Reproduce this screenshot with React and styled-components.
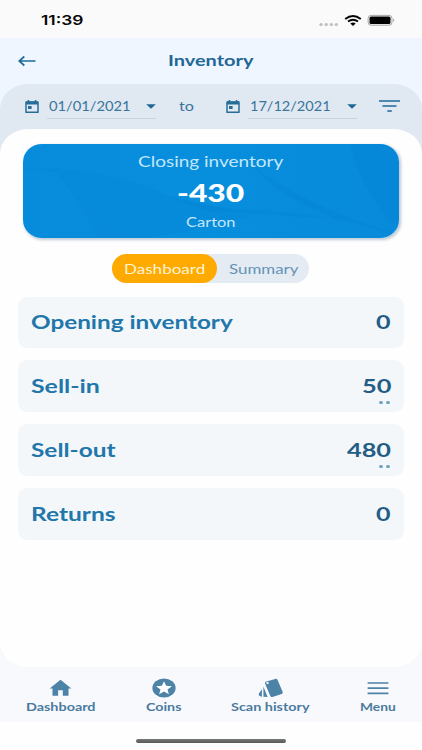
import React, { useLayoutEffect, useRef, useState } from "react";
import styled, { createGlobalStyle } from "styled-components";

const GlobalStyle = createGlobalStyle`
  * { box-sizing: border-box; }
  body { margin: 0; background: #fff; font-family: Lato, "Open Sans", sans-serif; }
`;

const Screen = styled.div`
  width: 422px;
  height: 750px;
  overflow: hidden;
  display: flex;
  flex-direction: column;
  background: #fefefe;
`;

/* Wide lettering: each label is stretched to the width it is given. */
const LabelBox = styled.span`
  display: block;
  flex: none;
  width: ${(p) => p.$width}px;
  height: ${(p) => p.$size * 1.3}px;
  line-height: ${(p) => p.$size * 1.3}px;
  font-size: ${(p) => p.$size}px;
  font-weight: ${(p) => p.$weight || 400};
  font-family: ${(p) => p.$family || "inherit"};
  color: ${(p) => p.$color};
  white-space: nowrap;
`;
const LabelText = styled.span`
  display: inline-block;
  transform-origin: 0 50%;
`;

function Label({ width, size, weight, color, family, children }) {
  const ref = useRef(null);
  const [scale, setScale] = useState(1);
  useLayoutEffect(() => {
    setScale(width / ref.current.offsetWidth);
  }, [width, size, children]);
  return (
    <LabelBox $width={width} $size={size} $weight={weight} $color={color} $family={family}>
      <LabelText ref={ref} style={{ transform: `scaleX(${scale})` }}>
        {children}
      </LabelText>
    </LabelBox>
  );
}

const StatusBar = styled.div`
  height: 38px;
  flex: none;
  display: flex;
  align-items: center;
  justify-content: space-between;
  padding: 3px 27px 0 41px;
  background: #fafafa;
`;
const StatusIcons = styled.div`
  display: flex;
  align-items: center;
`;
const Header = styled.header`
  height: 46px;
  flex: none;
  display: grid;
  grid-template-columns: 1fr auto 1fr;
  align-items: center;
  padding: 0 19px 0 18px;
  background: #eff6ff;
`;
const FilterBackdrop = styled.div`
  flex: none;
  background: #eff6ff;
`;
const FilterBar = styled.div`
  height: 69px;
  display: flex;
  align-items: flex-start;
  padding: 11px 20px 0 25px;
  background: #e0e8f1;
  border-radius: 28px 28px 0 0 / 25px 25px 0 0;
`;
const DateField = styled.div`
  display: flex;
  height: 23px;
  align-items: center;
  gap: 8px;
  margin-right: ${(p) => p.$after}px;
`;
const DateValue = styled.div`
  display: flex;
  align-items: center;
  justify-content: space-between;
  width: 109px;
  height: 24px;
  padding: 1px 0 0 2px;
  border-bottom: 1px solid #c8d3de;
`;
const ToWord = styled.div`
  display: flex;
  height: 23px;
  align-items: center;
  margin-right: 32px;
`;
const FilterButton = styled.div`
  display: flex;
  height: 22px;
  align-items: center;
`;
const Body = styled.div`
  flex: none;
  height: 538px;
  margin-top: -24px;
  background: linear-gradient(#e0e8f1 0 60px, #f8f9fd 60px);
`;
const Panel = styled.main`
  height: 100%;
  display: flex;
  flex-direction: column;
  align-items: center;
  padding: 14.5px 18px 0;
  background: #fefefe;
  border-radius: 28px / 25px;
`;
const ClosingCard = styled.section`
  width: 376px;
  height: 94px;
  flex: none;
  display: grid;
  overflow: hidden;
  border-radius: 19px / 18px;
  background: linear-gradient(90deg, #078cdc, #078edc 50%, #078ada);
  box-shadow: 1.5px 1.5px 3px rgba(20, 70, 110, 0.28);
  > * { grid-area: 1 / 1; }
`;
const CardCopy = styled.div`
  display: flex;
  flex-direction: column;
  align-items: center;
  padding: 8px 1px 0 0;
  z-index: 1;
`;
const Amount = styled.div`
  padding: 6px 1px 5px 0;
`;
const Tabs = styled.div`
  display: flex;
  flex: none;
  width: 197px;
  height: 29px;
  margin: 16px 1px 14px 0;
  border-radius: 15px;
  background: #e4ebf3;
`;
const Tab = styled.div`
  display: flex;
  align-items: center;
  justify-content: center;
  padding-top: 1px;
  width: ${(p) => (p.$active ? 105 : 92)}px;
  border-radius: 15px;
  background: ${(p) => (p.$active ? "#ffaa00" : "transparent")};
`;
const Rows = styled.div`
  display: flex;
  flex-direction: column;
  gap: 12.6px;
  width: 386px;
`;
const Row = styled.div`
  position: relative;
  height: 51.4px;
  display: flex;
  align-items: center;
  justify-content: space-between;
  padding: 1px 13px 0;
  border-radius: 9px;
  background: #f3f7fa;
`;
const MoreDots = styled.span`
  position: absolute;
  right: 14.5px;
  bottom: 7.5px;
  display: flex;
  gap: 3px;
`;
const Dot = styled.i`
  width: 4px;
  height: 3.5px;
  border-radius: 50%;
  background: #74a0be;
`;
const Nav = styled.nav`
  flex: none;
  height: 55px;
  display: flex;
  justify-content: space-between;
  padding: 11px 26px 0;
  background: #f8f9fd;
`;
const NavItem = styled.div`
  display: flex;
  flex-direction: column;
  align-items: center;
  gap: 2px;
`;
const HomeArea = styled.div`
  flex: 1;
  padding-top: 17px;
`;
const HomeBar = styled.div`
  width: 150px;
  height: 4px;
  margin: 0 auto;
  border-radius: 2px;
  background: linear-gradient(#777, #555b59);
`;

const Calendar = () => (
  <svg width="14" height="13" viewBox="0 0 14 13">
    <path d="M1 2h12v10.3H1z" fill="none" stroke="#286d98" strokeWidth="1.5" strokeLinejoin="round" />
    <path d="M1 1.5h12v3H1zM2.7 0h1.5v2H2.7zM9.8 0h1.5v2H9.8zM3 6h3.6v3.1H3z" fill="#286d98" />
  </svg>
);
const Caret = () => (
  <svg width="10" height="5" viewBox="0 0 10 5"><path d="M.2.3h9.6L5 4.8z" fill="#1f6795" /></svg>
);

const rows = [
  { name: "Opening inventory", nameWidth: 202, value: "0", valueWidth: 15 },
  { name: "Sell-in", nameWidth: 69, value: "50", valueWidth: 29, more: true },
  { name: "Sell-out", nameWidth: 85, value: "480", valueWidth: 44, more: true },
  { name: "Returns", nameWidth: 84, value: "0", valueWidth: 15 },
];

const navItems = [
  {
    name: "Dashboard", width: 70,
    icon: (
      <svg width="24" height="20" viewBox="0 0 24 20">
        <path d="M11.5 1.8 22.3 10.4H19.5V17.7H13.8V12.2H9.1V17.7H3.5V10.4H.7z" fill="#4e83a8" />
      </svg>
    ),
  },
  {
    name: "Coins", width: 36,
    icon: (
      <svg width="24" height="20" viewBox="0 0 24 20">
        <ellipse cx="12" cy="10" rx="11.6" ry="9.6" fill="#4e83a8" />
        <path d="M12 3.2l2.1 4.6 5.8.4-4.4 3.2 1.4 4.9-4.9-2.7-4.9 2.7 1.4-4.9-4.4-3.2 5.8-.4z" fill="#fff" />
      </svg>
    ),
  },
  {
    name: "Scan history", width: 79,
    icon: (
      <svg width="26" height="20" viewBox="0 0 26 20">
        <path d="M8.3 3.4 17.3.9q1.6-.4 2.3 1L24.7 14q.5 1.5-1.1 2.1l-9.2 2.8q-1.5.4-2.2-1.1L7 5.4q-.5-1.5 1.3-2z" fill="#4e83a8" />
        <path d="M5.4 8.5v10.2l4.2.2zM3.9 11.2.9 15.6q-.8 1.6.8 2.3l2.2.8z" fill="#4e83a8" />
        <ellipse cx="9.5" cy="5.1" rx="1.3" ry="1.1" fill="#f8f9fd" />
      </svg>
    ),
  },
  {
    name: "Menu", width: 36,
    icon: (
      <svg width="22" height="20" viewBox="0 0 22 20">
        <path d="M.6 5h20.8M.6 10.2h20.8M.6 15.3h20.8" stroke="#4e83a8" strokeWidth="1.7" />
      </svg>
    ),
  },
];

export default function App() {
  return (
    <Screen>
      <GlobalStyle />
      <StatusBar>
        <Label width={42} size={13.7} weight={600} color="#080808" family='Inter, "Liberation Sans", sans-serif'>11:39</Label>
        <StatusIcons>
          <svg width="76" height="16" viewBox="0 0 76 16">
            <g fill="#bfbfbf">
              <ellipse cx="2" cy="11.5" rx="1.7" ry="1.5" /><ellipse cx="7.2" cy="11.5" rx="1.7" ry="1.5" />
              <ellipse cx="12.3" cy="11.5" rx="1.7" ry="1.5" /><ellipse cx="17.3" cy="11.5" rx="1.7" ry="1.5" />
            </g>
            <g fill="none" stroke="#050505" strokeWidth="1.9">
              <path d="M26.2 6q7.8-6.2 15.6 0M29 8.6q5-3.8 10 0" />
            </g>
            <path d="M31.3 10.5q2.7-1.9 5.4 0L34 12.9z" fill="#050505" />
            <rect x="49.1" y="2.4" width="23.9" height="9.8" rx="3" fill="none" stroke="#a5a5a5" />
            <rect x="50.5" y="3.6" width="21" height="7.4" rx="1.6" fill="#000" />
            <path d="M74.2 5.5q2 1.7 0 3.5z" fill="#a5a5a5" />
          </svg>
        </StatusIcons>
      </StatusBar>
      <Header>
        <svg width="18" height="12" viewBox="0 0 18 12">
          <path d="M17.5 6H1.5M6.3 1.5 1.2 6l5.1 4.5" fill="none" stroke="#1f6a98" strokeWidth="1.7" />
        </svg>
        <Label width={86} size={15.3} weight={700} color="#1f6795">Inventory</Label>
      </Header>
      <FilterBackdrop>
        <FilterBar>
          <DateField $after={23}>
            <Calendar />
            <DateValue><Label width={82} size={14} color="#39759c">01/01/2021</Label><Caret /></DateValue>
          </DateField>
          <ToWord><Label width={15} size={14} color="#39759c">to</Label></ToWord>
          <DateField $after={22}>
            <Calendar />
            <DateValue><Label width={81} size={14} color="#39759c">17/12/2021</Label><Caret /></DateValue>
          </DateField>
          <FilterButton>
            <svg width="21" height="12" viewBox="0 0 21 12">
              <path d="M0 1h21M3.5 6h14M8.3 11h4.5" stroke="#1f6a98" strokeWidth="1.7" />
            </svg>
          </FilterButton>
        </FilterBar>
      </FilterBackdrop>
      <Body>
        <Panel>
          <ClosingCard>
            <svg width="376" height="94" viewBox="0 0 376 94">
              <path d="M0 25Q75 20 145 52Q200 68 250 65Q170 90 110 94Q60 65 35 29z" fill="#0078ca" opacity=".1" />
              <path d="M35 29Q60 62 75 94h35Q65 72 35 29z" fill="#0064b8" opacity=".07" />
              <path d="M230 23Q290 65 376 91V94Q300 62 188 68L145 52Q220 72 310 74Q260 55 230 23z" fill="#0068bb" opacity=".09" />
              <path d="M326 0Q338 45 376 88V0z" fill="#0069bd" opacity=".06" />
            </svg>
            <CardCopy>
              <Label width={145} size={14.8} color="#c4e7fb">Closing inventory</Label>
              <Amount><Label width={67} size={24.7} weight={900} color="#fff">-430</Label></Amount>
              <Label width={50} size={13.5} color="#c4e7fb">Carton</Label>
            </CardCopy>
          </ClosingCard>
          <Tabs>
            <Tab $active><Label width={81} size={13.7} color="#fff3d2">Dashboard</Label></Tab>
            <Tab><Label width={69} size={13.7} color="#6593b6">Summary</Label></Tab>
          </Tabs>
          <Rows>
            {rows.map((r) => (
              <Row key={r.name}>
                <Label width={r.nameWidth} size={18.4} weight={700} color="#2176aa">{r.name}</Label>
                <Label width={r.valueWidth} size={18.4} weight={700} color="#235d85">{r.value}</Label>
                {r.more && <MoreDots><Dot /><Dot /></MoreDots>}
              </Row>
            ))}
          </Rows>
        </Panel>
      </Body>
      <Nav>
        {navItems.map((n) => (
          <NavItem key={n.name}>
            {n.icon}
            <Label width={n.width} size={11.5} weight={700} color="#4a7a9d">{n.name}</Label>
          </NavItem>
        ))}
      </Nav>
      <HomeArea><HomeBar /></HomeArea>
    </Screen>
  );
}
